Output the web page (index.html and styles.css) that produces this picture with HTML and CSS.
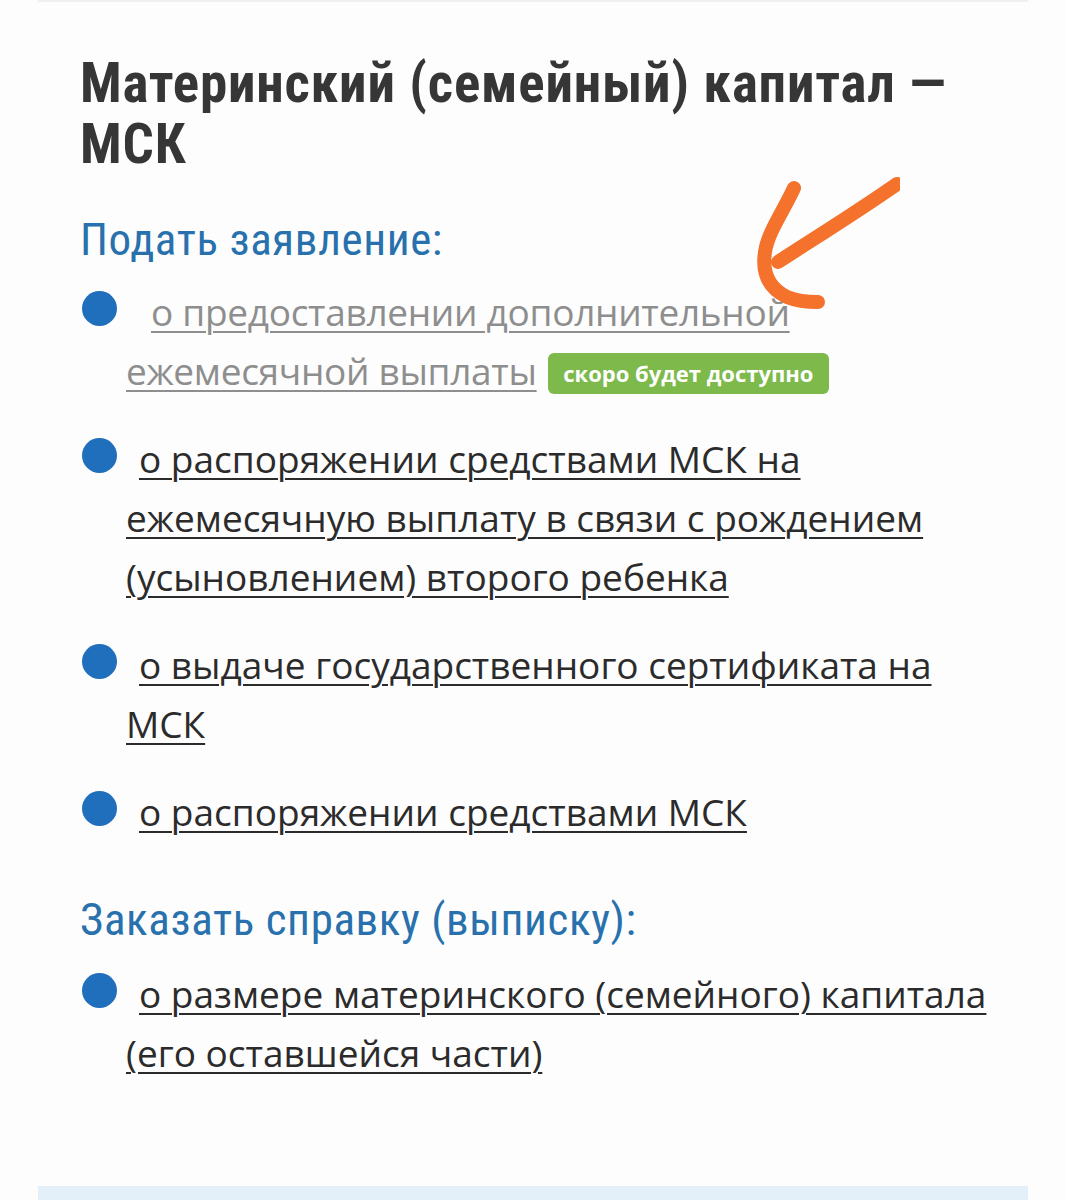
FILE: index.html
```html
<!DOCTYPE html>
<html lang="ru">
<head>
<meta charset="utf-8">
<title>Материнский (семейный) капитал — МСК</title>
<link rel="stylesheet" href="styles.css">
</head>
<body>
<div class="page">
  <div class="topbar"></div>
  <section class="card">
    <h1 class="title">Материнский (семейный) капитал — МСК</h1>

    <h2 class="subtitle">Подать заявление:</h2>
    <ul class="links">
      <li class="item item-disabled"><span class="dot"></span><a class="link link-disabled" href="#">о предоставлении дополнительной ежемесячной выплаты</a> <span class="badge">скоро будет доступно</span></li>
      <li class="item"><span class="dot"></span><a class="link" href="#">о распоряжении средствами МСК на ежемесячную выплату в связи с рождением (усыновлением) второго ребенка</a></li>
      <li class="item"><span class="dot"></span><a class="link" href="#">о выдаче государственного сертификата на МСК</a></li>
      <li class="item"><span class="dot"></span><a class="link" href="#">о распоряжении средствами МСК</a></li>
    </ul>

    <h2 class="subtitle subtitle-second">Заказать справку (выписку):</h2>
    <ul class="links links-last">
      <li class="item"><span class="dot"></span><a class="link" href="#">о размере материнского (семейного) капитала (его оставшейся части)</a></li>
    </ul>

    <svg class="arrow" width="160" height="140" viewBox="740 170 160 140" aria-hidden="true">
      <path d="M794,188 C784,210 768,232 765,252 C762,272 768,288 787,297 C797,301 808,302 818,302" fill="none" stroke="#f4722c" stroke-width="14" stroke-linecap="round" stroke-linejoin="round"/>
      <path d="M897,184 C860,210 815,238 778,262" fill="none" stroke="#f4722c" stroke-width="14" stroke-linecap="round"/>
    </svg>
  </section>
  <div class="bottom-strip"></div>
</div>
</body>
</html>
```

FILE: styles.css
```css
html, body {
  margin: 0;
  padding: 0;
}

body {
  background: #fdfdfd;
  font-family: "Open Sans", "Liberation Sans", sans-serif;
}

.page {
  height: 1200px;
  display: flex;
  flex-direction: column;
  overflow: hidden;
}

.topbar {
  flex-shrink: 0;
  height: 2px;
  margin: 0 37px 0 38px;
  background: #eef0f2;
  box-shadow: 0 1px 2px rgba(0, 0, 0, 0.08);
}

.card {
  flex: 1;
  margin: 0 37px 0 38px;
  padding: 51px 28px 0 42px;
  background: #fdfdfd;
}

.title {
  margin: 0;
  font-family: "Roboto", "Liberation Sans", sans-serif;
  font-weight: 700;
  font-stretch: 85%;
  font-size: 55px;
  line-height: 61px;
  letter-spacing: 0.8px;
  color: #363636;
}

.subtitle {
  margin: 38px 0 0;
  font-family: "Roboto", "Liberation Sans", sans-serif;
  font-weight: 400;
  font-stretch: 85%;
  font-size: 45px;
  line-height: 54px;
  letter-spacing: 0.6px;
  color: #2871ad;
}

.subtitle-second {
  margin-top: 52px;
}

.links {
  list-style: none;
  margin: 15px 0 0;
  padding: 0 0 0 46px;
}

.links-last {
  margin-top: 17px;
}

.item {
  font-size: 37px;
  line-height: 59px;
  color: #2b2b2b;
  text-indent: -44px;
}

.item + .item {
  margin-top: 29px;
}

.dot {
  display: inline-block;
  width: 35px;
  height: 35px;
  border-radius: 50%;
  background: #1f6fbd;
  margin-right: 22px;
  text-indent: 0;
}

.item-disabled .dot {
  margin-right: 34px;
}

.link {
  color: #2b2b2b;
  text-decoration: underline;
  text-decoration-thickness: 2px;
  text-underline-offset: 5px;
}

.link-disabled {
  color: #8e8e8e;
  letter-spacing: -0.3px;
}

.badge {
  display: inline-block;
  text-indent: 0;
  margin-left: 2px;
  padding: 0 15px;
  height: 41px;
  line-height: 41px;
  vertical-align: 3px;
  border-radius: 6px;
  background: #7dba4b;
  color: #ffffff;
  font-weight: 700;
  font-size: 22px;
}

.arrow {
  position: absolute;
  left: 740px;
  top: 170px;
  pointer-events: none;
}

.bottom-strip {
  flex-shrink: 0;
  height: 14px;
  margin: 0 37px 0 38px;
  background: #e3f0fa;
}
```
